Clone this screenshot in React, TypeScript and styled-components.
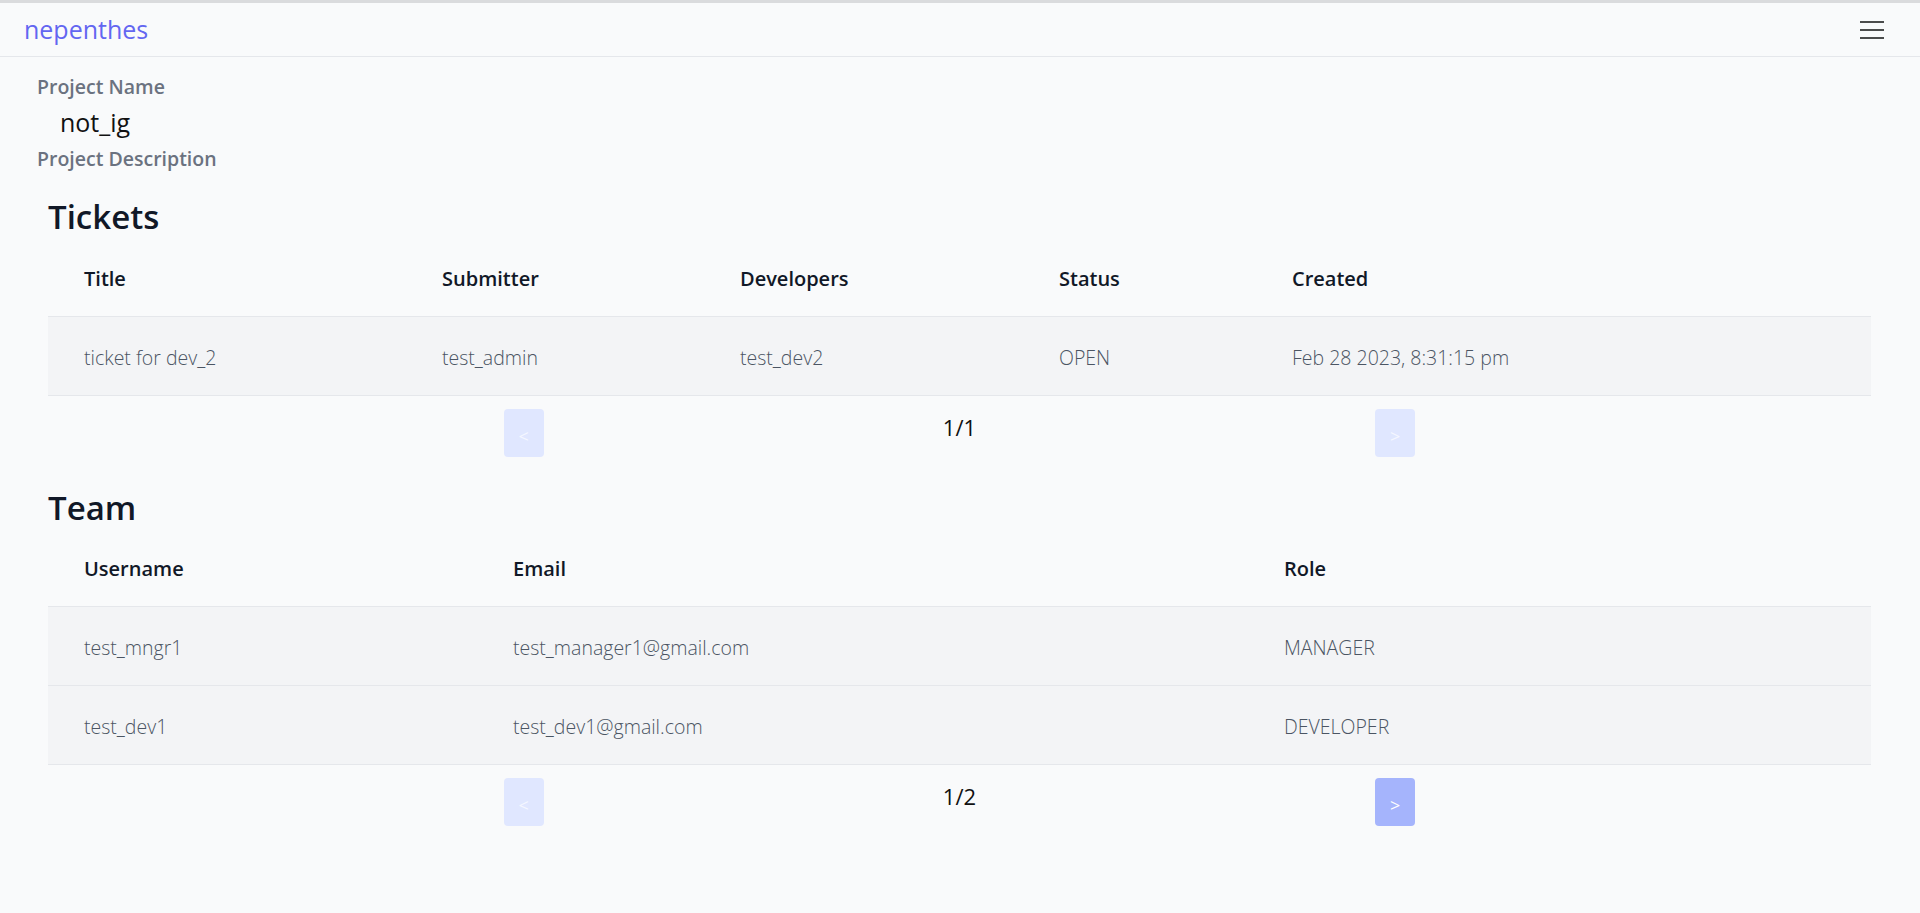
import React from "react";
import styled, { createGlobalStyle } from "styled-components";

const GlobalStyle = createGlobalStyle`
  html, body {
    margin: 0;
    padding: 0;
    background: #f9fafb;
    font-family: "Open Sans", "Noto Sans", sans-serif;
    color: #111827;
  }
  * { box-sizing: border-box; }
`;

const Page = styled.div`
  min-height: 913px;
  background: #f9fafb;
`;

const NavBar = styled.nav`
  height: 57px;
  border-top: 3px solid #dadbdd;
  border-bottom: 1px solid #e5e7eb;
  display: flex;
  align-items: center;
  justify-content: space-between;
  padding: 0 36px 0 24px;
`;

const Brand = styled.a`
  font-size: 25px;
  color: #6366f1;
  text-decoration: none;
  line-height: 30px;
  margin-top: -1px;
`;

const MenuButton = styled.button`
  border: none;
  background: transparent;
  padding: 0;
  width: 24px;
  height: 18px;
  display: flex;
  cursor: pointer;
`;

const Info = styled.section`
  padding: 16px 0 0 37px;
  display: flex;
  flex-direction: column;
`;

const Label = styled.div`
  font-size: 19.5px;
  font-weight: 600;
  color: #6b7280;
  line-height: 28px;
`;

const ProjectName = styled.div`
  font-size: 25px;
  color: #111;
  line-height: 30px;
  padding-left: 23px;
  margin: 6px 0 8px;
`;

const Section = styled.section<{ $top: number }>`
  padding: 0 49px 0 48px;
  margin-top: ${(p) => p.$top}px;
`;

const Heading = styled.h2`
  margin: 0 0 6px;
  font-size: 33px;
  line-height: 36px;
  font-weight: 600;
  color: #111827;
`;

const Table = styled.table`
  width: 100%;
  border-collapse: collapse;
  table-layout: fixed;
`;

const HeadCell = styled.th`
  text-align: left;
  font-size: 20px;
  font-weight: 600;
  color: #111827;
  height: 75px;
  padding: 0 0 0 36px;
  border-bottom: 1px solid #e5e7eb;
`;

const BodyRow = styled.tr`
  background: #f3f4f6;
  border-bottom: 1px solid #e5e7eb;
`;

const Cell = styled.td`
  font-size: 19.5px;
  font-weight: 300;
  color: #4b5563;
  height: 79px;
  padding: 3px 0 0 36px;
  white-space: nowrap;
`;

const Pager = styled.div`
  width: 50%;
  margin: 13px auto 0;
  display: flex;
  justify-content: space-between;
  align-items: flex-start;
`;

const PageButton = styled.button<{ $enabled: boolean }>`
  width: 40px;
  height: 48px;
  border: none;
  border-radius: 4px;
  background: ${(p) => (p.$enabled ? "#a5b4fc" : "#e0e7ff")};
  color: ${(p) => (p.$enabled ? "#ffffff" : "#f5f7ff")};
  font-family: "Open Sans", sans-serif;
  font-size: 18px;
  padding: 6px 0 0;
  cursor: ${(p) => (p.$enabled ? "pointer" : "default")};
`;

const PageText = styled.span`
  font-size: 22px;
  line-height: 36px;
  color: #111;
`;

type Col = { label: string; width: number };

const ticketCols: Col[] = [
  { label: "Title", width: 358 },
  { label: "Submitter", width: 298 },
  { label: "Developers", width: 319 },
  { label: "Status", width: 233 },
  { label: "Created", width: 615 },
];

const ticketRows = [
  ["ticket for dev_2", "test_admin", "test_dev2", "OPEN", "Feb 28 2023, 8:31:15 pm"],
];

const teamCols: Col[] = [
  { label: "Username", width: 429 },
  { label: "Email", width: 771 },
  { label: "Role", width: 623 },
];

const teamRows = [
  ["test_mngr1", "test_manager1@gmail.com", "MANAGER"],
  ["test_dev1", "test_dev1@gmail.com", "DEVELOPER"],
];

function DataTable({ cols, rows }: { cols: Col[]; rows: string[][] }) {
  return (
    <Table>
      <colgroup>
        {cols.map((c) => (
          <col key={c.label} style={{ width: c.width }} />
        ))}
      </colgroup>
      <thead>
        <tr>
          {cols.map((c) => (
            <HeadCell key={c.label}>{c.label}</HeadCell>
          ))}
        </tr>
      </thead>
      <tbody>
        {rows.map((r, i) => (
          <BodyRow key={i}>
            {r.map((v, j) => (
              <Cell key={j}>{v}</Cell>
            ))}
          </BodyRow>
        ))}
      </tbody>
    </Table>
  );
}

function Pagination({ page, total }: { page: number; total: number }) {
  return (
    <Pager>
      <PageButton $enabled={page > 1}>&lt;</PageButton>
      <PageText>
        {page}/{total}
      </PageText>
      <PageButton $enabled={page < total}>&gt;</PageButton>
    </Pager>
  );
}

export default function App() {
  return (
    <Page>
      <GlobalStyle />
      <NavBar>
        <Brand href="#">nepenthes</Brand>
        <MenuButton aria-label="menu">
          <svg width="24" height="18" viewBox="0 0 24 18">
            <g stroke="#000" strokeWidth="1.4">
              <line x1="0" y1="1" x2="24" y2="1" />
              <line x1="0" y1="9" x2="24" y2="9" />
              <line x1="0" y1="17" x2="24" y2="17" />
            </g>
          </svg>
        </MenuButton>
      </NavBar>
      <Info>
        <Label>Project Name</Label>
        <ProjectName>not_ig</ProjectName>
        <Label>Project Description</Label>
      </Info>
      <Section $top={26}>
        <Heading>Tickets</Heading>
        <DataTable cols={ticketCols} rows={ticketRows} />
        <Pagination page={1} total={1} />
      </Section>
      <Section $top={33}>
        <Heading>Team</Heading>
        <DataTable cols={teamCols} rows={teamRows} />
        <Pagination page={1} total={2} />
      </Section>
    </Page>
  );
}
